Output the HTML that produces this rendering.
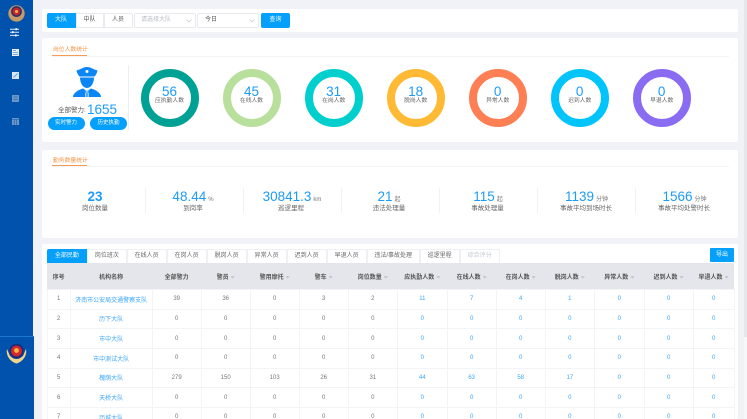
<!DOCTYPE html>
<html lang="zh"><head><meta charset="utf-8"><title>勤务统计</title>
<style>
html,body{margin:0;padding:0;width:747px;height:419px;overflow:hidden;background:#f0f2f8}
body{position:relative;font-family:"Liberation Sans","Noto Sans CJK SC",sans-serif;font-size:6px;color:#666}
#w{position:absolute;left:0;top:0;width:747px;height:419px;overflow:hidden;filter:blur(.3px)}
.a{position:absolute;white-space:nowrap}
.card{position:absolute;background:#fff;border-radius:2px;left:42px;width:695.5px}
.btn{position:absolute;top:13px;height:15px;line-height:13px;text-align:center;background:#fff;border:1px solid #e8eaf0;box-sizing:border-box;color:#555}
.ttl{position:absolute;left:53px;color:#f5964a;font-size:5.8px;line-height:8px}
.ul{position:absolute;left:52px;width:35px;height:1px;background:#f79a52}
.hr{position:absolute;left:52px;width:677px;height:1px;background:#f3f4f7}
.ring{position:absolute;top:69px;width:58px;height:58px;border-radius:50%;box-sizing:border-box;border:8.5px solid;background:#fff;text-align:center}
.ring b{position:absolute;left:0;right:0;top:7px;font-weight:400;font-size:13.5px;line-height:16px;color:#1d9bf8}
.ring i{position:absolute;left:-4px;right:-4px;top:21px;font-style:normal;font-size:5.8px;line-height:7px;color:#666}
.pill{position:absolute;top:117px;height:13px;width:37px;border-radius:7px;background:#05a0fb;color:#fff;text-align:center;line-height:13px;font-size:5.5px}
.v{position:absolute;width:1px;top:188px;height:25px;background:#f1f2f5}
.n{position:absolute;top:188px;transform:translateX(-50%);white-space:nowrap;color:#1d9bf8;font-size:13.5px;line-height:18px}
.n small{font-size:6px;color:#777;margin-left:2px}
.l{position:absolute;top:205px;transform:translateX(-50%);white-space:nowrap;color:#666;font-size:6.5px;line-height:8px}
.tab{position:absolute;top:248.5px;height:14.8px;line-height:13.5px;text-align:center;background:#fff;border:1px solid #eff0f4;border-bottom:0;box-sizing:border-box;color:#666}
.btn.blue,.tab.blue{background:#05a0fb;border-color:#05a0fb;color:#fff}
table{position:absolute;left:46.7px;top:263.3px;width:687px;border-collapse:collapse;table-layout:fixed;font-size:6px}
th{height:25.7px;padding:0;background:#e4e6ec;color:#555;font-weight:700;font-size:6px;white-space:nowrap}
th u{text-decoration:none;color:#b3b6bf;font-weight:400;font-size:5px;margin-left:2px}
td{height:19.65px;padding:0;text-align:center;border:1px solid #f3f4f8;color:#777;box-sizing:border-box;white-space:nowrap}
td.b{color:#3aa6f9}
</style></head><body><div id="w">

<div style="position:absolute;left:0;top:0;width:33px;height:419px;background:#0052ad"></div>
<div style="position:absolute;left:0;top:336px;width:34px;height:83px;background:#0052ad;border-top:1px solid #1a78d0;box-sizing:border-box"></div>

<svg style="position:absolute;left:8px;top:4px" width="17" height="18" viewBox="0 0 17 18"><circle cx="8.5" cy="9.500" r="8.200" fill="#c39a68"/><circle cx="8.500" cy="7.500" r="5.400" fill="#2a2f6b"/><circle cx="8.500" cy="7.500" r="3.900" fill="#c8232c"/><circle cx="8.500" cy="7.500" r="1.500" fill="#e8b94a"/></svg>

<svg style="position:absolute;left:10px;top:28px" width="10" height="9" viewBox="0 0 10 9"><path d="M0 1.2h9M0 4.2h9M0 7.4h9" stroke="#dfe9f7" stroke-width="1"/><rect x="5.5" y=".2" width="1.6" height="2" fill="#fff"/><rect x="2" y="3.2" width="1.6" height="2" fill="#fff"/><rect x="5" y="6.4" width="1.6" height="2" fill="#fff"/></svg>

<svg style="position:absolute;left:12px;top:49px" width="7" height="7" viewBox="0 0 7 7"><rect width="7" height="7" fill="#e8eff9"/><path d="M1 1.5h3M1 3.5h5M1 5.5h5" stroke="#5f93d0" stroke-width=".8"/></svg>
<svg style="position:absolute;left:12px;top:72px" width="7" height="7" viewBox="0 0 7 7"><rect width="7" height="7" fill="#d8e5f6"/><path d="M1.5 5.5L5.5 1.5" stroke="#6d9dd6" stroke-width="1"/></svg>
<svg style="position:absolute;left:12px;top:95px" width="7" height="7" viewBox="0 0 7 7"><rect width="7" height="7" fill="#6f97c6"/><path d="M1.5 2h4M1.5 4.5h4" stroke="#2a6cb4" stroke-width=".8"/></svg>
<svg style="position:absolute;left:12px;top:118px" width="7" height="7" viewBox="0 0 7 7"><rect width="7" height="7" fill="#6f97c6"/><path d="M2.3 1v6M4.6 1v6M0 1.5h7" stroke="#2a6cb4" stroke-width=".8"/></svg>

<svg style="position:absolute;left:6px;top:342px" width="21" height="22" viewBox="0 0 21 22"><path d="M1 7c-1.500 7 4 13 9.500 14.500C16 20 21.500 14 20 7l-3 7c-2 2-4 3-6.500 3S6 16 4 14z" fill="#f3d489"/><circle cx="10.500" cy="9" r="7.200" fill="#1c2a78"/><circle cx="10.500" cy="9" r="5.400" fill="#d5262b"/><circle cx="10.500" cy="8.500" r="2.400" fill="#eeb93f"/><path d="M4 15c2 2.500 4.500 3.500 6.500 3.500s4.500-1 6.500-3.500" stroke="#f3d489" stroke-width="2" fill="none"/></svg>

<div class="card" style="top:9px;height:23px"></div>
<div class="btn blue" style="left:46.5px;width:29px;border-radius:2px 0 0 2px">大队</div>
<div class="btn" style="left:75.500px;width:28px">中队</div>
<div class="btn" style="left:103.500px;width:29px;border-radius:0 2px 2px 0">人员</div>
<div class="btn" style="left:134px;width:62px;text-align:left;padding-left:6px;color:#b8bbc4;border-radius:2px">请选择大队</div>
<div class="btn" style="left:197px;width:62px;text-align:left;padding-left:7px;border-radius:2px">今日</div>
<svg style="position:absolute;left:186px;top:19px" width="6" height="4" viewBox="0 0 6 4"><path d="M.5.500L3 3 5.500.500" fill="none" stroke="#c4c7cf" stroke-width=".7"/></svg>
<svg style="position:absolute;left:249px;top:19px" width="6" height="4" viewBox="0 0 6 4"><path d="M.5.500L3 3 5.500.500" fill="none" stroke="#c4c7cf" stroke-width=".7"/></svg>
<div class="btn blue" style="left:261px;width:29px;border-radius:2px">查询</div>

<div class="card" style="top:38px;height:104px"></div>
<div class="ttl" style="top:46px">岗位人数统计</div>
<div class="ul" style="top:55px"></div>
<div class="hr" style="top:56px"></div>

<svg style="position:absolute;left:71px;top:66px" width="32" height="32" viewBox="0 0 32 32"><path d="M16 1c3.500 0 5 1.800 10.500 3.500-.5 2.500-1.500 4.500-3 6H8.500C7 9 6 7 5.500 4.500 11 2.800 12.500 1 16 1z" fill="#0a86f7"/><circle cx="16" cy="5.500" r="1.500" fill="#fff"/><path d="M9 11.500h14c0 5.500-3 10.500-7 10.500s-7-5-7-10.500z" fill="#0a86f7"/><path d="M2 31c0-4 5-7 10-8.500l4 2.500 4-2.500c5 1.500 10 4.500 10 8.500z" fill="#0a86f7"/><path d="M14.500 24.500l1.500 2 1.500-2M16 26.500v4.500M14.500 26.500v4.500M17.500 26.500v4.500" stroke="#fff" stroke-width=".6" fill="none"/></svg>
<div class="a" style="left:58px;top:107px;font-size:6.500px;line-height:8px;color:#555">全部警力:</div>
<div class="a" style="left:87px;top:101px;font-size:13.500px;line-height:17px;color:#1d9bf8">1655</div>
<div class="pill" style="left:47.500px">实时警力</div>
<div class="pill" style="left:90px">历史执勤</div>
<div style="position:absolute;left:128px;top:65px;width:1px;height:65px;background:#eceef2"></div>

<div class="ring" style="left:140.500px;border-color:#00a195"><b>56</b><i>应执勤人数</i></div>
<div class="ring" style="left:222.500px;border-color:#b9df9d"><b>45</b><i>在线人数</i></div>
<div class="ring" style="left:304.700px;border-color:#00cfcd"><b>31</b><i>在岗人数</i></div>
<div class="ring" style="left:386.700px;border-color:#ffba35"><b>18</b><i>脱岗人数</i></div>
<div class="ring" style="left:468.700px;border-color:#ff7f55"><b>0</b><i>异常人数</i></div>
<div class="ring" style="left:550.700px;border-color:#00c4fa"><b>0</b><i>迟到人数</i></div>
<div class="ring" style="left:632.700px;border-color:#8a6cf2"><b>0</b><i>早退人数</i></div>

<div class="card" style="top:150px;height:88px"></div>
<div class="ttl" style="top:157px">勤务数量统计</div>
<div class="ul" style="top:165px"></div>
<div class="hr" style="top:166px"></div>

<div class="n" style="left:95px;font-weight:700">23</div><div class="l" style="left:95px">岗位数量</div>
<div class="v" style="left:144.500px"></div>
<div class="n" style="left:193px">48.44<small>%</small></div><div class="l" style="left:193px">到岗率</div>
<div class="v" style="left:242.500px"></div>
<div class="n" style="left:292px">30841.3<small>km</small></div><div class="l" style="left:291px">巡逻里程</div>
<div class="v" style="left:340.500px"></div>
<div class="n" style="left:389px">21<small>起</small></div><div class="l" style="left:389px">违法处理量</div>
<div class="v" style="left:438.500px"></div>
<div class="n" style="left:488px">115<small>起</small></div><div class="l" style="left:487.500px">事故处理量</div>
<div class="v" style="left:537px"></div>
<div class="n" style="left:586.500px">1139<small>分钟</small></div><div class="l" style="left:586px">事故平均到场时长</div>
<div class="v" style="left:635px"></div>
<div class="n" style="left:684.500px">1566<small>分钟</small></div><div class="l" style="left:684px">事故平均处警时长</div>

<div class="card" style="top:244px;height:175px"></div>
<div class="tab blue" style="left:46.700px;width:40.300px;border-radius:2px 0 0 0">全部民勤</div>
<div class="tab" style="left:87px;width:39.700px">岗位班次</div>
<div class="tab" style="left:126.700px;width:40px">在线人员</div>
<div class="tab" style="left:166.700px;width:40px">在岗人员</div>
<div class="tab" style="left:206.700px;width:40px">脱岗人员</div>
<div class="tab" style="left:246.700px;width:40px">异常人员</div>
<div class="tab" style="left:286.700px;width:40px">迟到人员</div>
<div class="tab" style="left:326.700px;width:40px">早退人员</div>
<div class="tab" style="left:366.700px;width:53px">违法/事故处理</div>
<div class="tab" style="left:419.700px;width:40px">巡逻里程</div>
<div class="tab" style="left:459.700px;width:40px;color:#c4c7cf">综合评分</div>
<div class="btn blue" style="left:710.300px;top:248px;width:23.400px;height:14px;line-height:12px;border-radius:1px">导出</div>

<table>
<colgroup><col style="width:23px"><col style="width:82px"><col style="width:49px"><col style="width:49px"><col style="width:49px"><col style="width:49px"><col style="width:49.300px"><col style="width:49.700px"><col style="width:49px"><col style="width:49px"><col style="width:49.300px"><col style="width:49.700px"><col style="width:49px"><col style="width:41px"></colgroup>
<tr><th>序号</th><th>机构名称</th><th>全部警力</th><th>警员<u>≑</u></th><th>警用摩托<u>≑</u></th><th>警车<u>≑</u></th><th>岗位数量<u>≑</u></th><th>应执勤人数<u>≑</u></th><th>在线人数<u>≑</u></th><th>在岗人数<u>≑</u></th><th>脱岗人数<u>≑</u></th><th>异常人数<u>≑</u></th><th>迟到人数<u>≑</u></th><th>早退人数<u>≑</u></th></tr>
<tr><td>1</td><td class="b">济南市公安局交通警察支队</td><td>39</td><td>36</td><td>0</td><td>3</td><td>2</td><td class="b">11</td><td class="b">7</td><td class="b">4</td><td class="b">1</td><td class="b">0</td><td class="b">0</td><td class="b">0</td></tr>
<tr><td>2</td><td class="b">历下大队</td><td>0</td><td>0</td><td>0</td><td>0</td><td>0</td><td class="b">0</td><td class="b">0</td><td class="b">0</td><td class="b">0</td><td class="b">0</td><td class="b">0</td><td class="b">0</td></tr>
<tr><td>3</td><td class="b">市中大队</td><td>0</td><td>0</td><td>0</td><td>0</td><td>0</td><td class="b">0</td><td class="b">0</td><td class="b">0</td><td class="b">0</td><td class="b">0</td><td class="b">0</td><td class="b">0</td></tr>
<tr><td>4</td><td class="b">市中测试大队</td><td>0</td><td>0</td><td>0</td><td>0</td><td>0</td><td class="b">0</td><td class="b">0</td><td class="b">0</td><td class="b">0</td><td class="b">0</td><td class="b">0</td><td class="b">0</td></tr>
<tr><td>5</td><td class="b">槐荫大队</td><td>279</td><td>150</td><td>103</td><td>26</td><td>31</td><td class="b">44</td><td class="b">63</td><td class="b">58</td><td class="b">17</td><td class="b">0</td><td class="b">0</td><td class="b">0</td></tr>
<tr><td>6</td><td class="b">天桥大队</td><td>0</td><td>0</td><td>0</td><td>0</td><td>0</td><td class="b">0</td><td class="b">0</td><td class="b">0</td><td class="b">0</td><td class="b">0</td><td class="b">0</td><td class="b">0</td></tr>
<tr><td>7</td><td class="b">历城大队</td><td>0</td><td>0</td><td>0</td><td>0</td><td>0</td><td class="b">0</td><td class="b">0</td><td class="b">0</td><td class="b">0</td><td class="b">0</td><td class="b">0</td><td class="b">0</td></tr>
</table>

<div style="position:absolute;left:743.700px;top:0;width:3.300px;height:419px;background:#f7f7f8"></div>
<div style="position:absolute;left:743.700px;top:0;width:3.300px;height:337px;background:#e6e7ea"></div>
</div></body></html>
